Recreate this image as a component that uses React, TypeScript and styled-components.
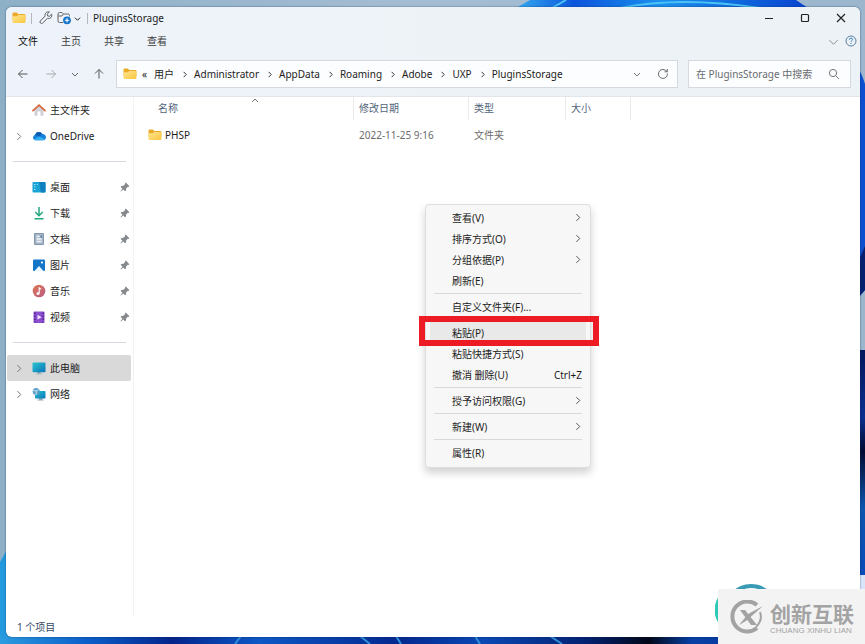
import React from "react";
import styled, { createGlobalStyle } from "styled-components";

const GlobalStyle = createGlobalStyle`
  * { box-sizing: border-box; }
  body { margin: 0; background: #8fabc4; }
  body, button, input, table {
    font-family: "Noto Sans", "Noto Sans CJK SC", sans-serif;
    font-size: 10px;
    line-height: 16px;
    color: #1c1c1c;
  }
`;

const Desktop = styled.div`
  position: relative;
  display: flex;
  min-height: 100vh;
  padding: 7px 5px 7px 6px;
  overflow: hidden;
`;

const WallpaperArt = styled.svg`
  position: absolute;
  inset: 0;
  width: 100%;
  height: 100%;
`;

const ExplorerWindow = styled.main`
  position: relative;
  flex: 1;
  min-width: 0;
  display: flex;
  flex-direction: column;
  background: #fff;
  border-radius: 6px;
  overflow: hidden;
  box-shadow: 0 0 2px rgba(20, 40, 70, 0.7);
`;

const Chrome = styled.header`
  background: linear-gradient(90deg, #eef3fb, #edf2f6 70%);
  border-bottom: 1px solid #e2e6ea;
`;

const TitleBar = styled.div`
  display: flex;
  align-items: center;
  height: 22px;
  padding: 0 7px 0 6px;
`;

const PlainButton = styled.button<{ $width?: number }>`
  display: inline-flex;
  align-items: center;
  justify-content: center;
  flex: none;
  width: ${(p) => (p.$width ? `${p.$width}px` : "auto")};
  height: 20px;
  padding: 0;
  border: 0;
  background: transparent;
`;

const TitleDivider = styled.span`
  width: 1px;
  height: 11px;
  margin: 0 5px;
  background: #b4b8be;
`;

const WindowTitle = styled.h1`
  margin: 0;
  flex: 1;
  font-size: 10px;
  font-weight: 400;
`;

const WindowControls = styled.div`
  display: flex;
  gap: 12px;
`;

const RibbonBar = styled.nav`
  display: flex;
  align-items: center;
  height: 24px;
  padding: 0 1px 0 12px;
`;

const RibbonTab = styled(PlainButton)<{ $active?: boolean }>`
  margin-right: 23px;
  color: ${(p) => (p.$active ? "#111" : "#3c3c3c")};
`;

const Spacer = styled.div`
  flex: 1;
`;

const NavigationRow = styled.div`
  display: flex;
  align-items: center;
  padding: 7px 9px 8px 4px;
`;

const NavButtons = styled.div`
  display: flex;
  width: 106px;
  flex: none;
`;

const AddressBar = styled.div`
  display: flex;
  align-items: center;
  flex: 1;
  min-width: 0;
  height: 28px;
  padding: 0 1px 0 6px;
  background: #fcfdfe;
  border: 1px solid #d3d9df;
`;

const Crumbs = styled.ol`
  display: flex;
  align-items: center;
  gap: 7px;
  margin: 0;
  padding: 0 0 0 5px;
  list-style: none;
  white-space: nowrap;

  li { display: flex; align-items: center; gap: 6px; }
  a { color: #1c1c1c; text-decoration: none; }
`;

const SearchBox = styled.label`
  display: flex;
  align-items: center;
  flex: none;
  width: 163px;
  height: 28px;
  margin-left: 10px;
  padding: 0 10px 0 7px;
  background: #fcfdfe;
  border: 1px solid #d3d9df;
`;

const SearchInput = styled.input`
  flex: 1;
  min-width: 0;
  padding: 0;
  border: 0;
  outline: 0;
  background: transparent;
  &::placeholder { color: #686c70; opacity: 1; }
`;

const Content = styled.div`
  display: flex;
  flex: 1;
`;

const Sidebar = styled.aside`
  flex: none;
  width: 128px;
  padding: 0 2px 0 1px;
  border-right: 1px solid #f3f3f3;
`;

const SideItem = styled.a<{ $selected?: boolean }>`
  display: grid;
  grid-template-columns: 23px 16px 1fr 11px;
  column-gap: 2px;
  align-items: center;
  height: 26px;
  border-radius: 2px;
  color: #1c1c1c;
  text-decoration: none;
  background: ${(p) => (p.$selected ? "#d9d9d9" : "transparent")};

  > :first-child { justify-self: center; }
`;

const SideDivider = styled.hr`
  height: 1px;
  margin: 12px 5px 12px 6px;
  border: 0;
  background: #d5dbe0;
`;

const FilePane = styled.section`
  flex: 1;
  min-width: 0;
  padding-left: 14px;
`;

const FileTable = styled.table`
  table-layout: fixed;
  border-collapse: separate;
  border-spacing: 0;
  width: 483px;

  th {
    position: relative;
    height: 23px;
    padding: 0 0 2px 5px;
    border-right: 1px solid #e8eaec;
    text-align: left;
    font-weight: 400;
    color: #52647a;
  }
  th:first-child { padding-left: 10px; }
  td { height: 29px; padding: 0 0 0 5px; color: #6b6b6b; }
  td:first-child { padding-left: 0; color: #1c1c1c; }
`;

const SortMark = styled.span`
  position: absolute;
  top: 0;
  left: 50%;
  display: flex;
`;

const FileName = styled.a`
  display: flex;
  align-items: center;
  gap: 3px;
  color: inherit;
  text-decoration: none;
`;

const StatusBar = styled.footer`
  height: 21px;
  padding: 3px 11px;
  color: #33475f;
`;

const ContextMenu = styled.div`
  position: absolute;
  left: 425px;
  top: 204px;
  width: 166px;
  padding: 2px 4px 4px;
  background: #f7f7f7;
  border: 1px solid #dedede;
  border-radius: 4px;
  box-shadow: 0 5px 9px rgba(0, 0, 0, 0.18);
`;

const MenuItem = styled.button<{ $hovered?: boolean }>`
  position: relative;
  display: flex;
  align-items: center;
  justify-content: space-between;
  width: 100%;
  height: 21px;
  padding: 0 4px 0 22px;
  border: 0;
  text-align: left;
  background: ${(p) => (p.$hovered ? "#e9e9e9" : "transparent")};
`;

const MenuDivider = styled.hr`
  height: 1px;
  margin: 2px 4px;
  border: 0;
  background: #d9d9d9;
`;

const HighlightFrame = styled.span`
  position: absolute;
  inset: -6px -13px -3px -11px;
  border: 6px solid #ed1c24;
`;

const Watermark = styled.div`
  position: absolute;
  right: 0;
  bottom: 0;
  display: flex;
  align-items: center;
  width: 147px;
  height: 55px;
  padding-left: 11px;
  gap: 5px;
  background: #f3f3f3;
`;

const WatermarkText = styled.div`
  color: #a3a3a3;
  white-space: nowrap;
`;

const WatermarkName = styled.div`
  font: 700 21px/28px "Noto Sans CJK SC", sans-serif;
`;

const WatermarkLatin = styled.div`
  font: 8px/8px "Liberation Sans", sans-serif;
`;

const TealArc = styled.svg`
  position: absolute;
  right: 76px;
  bottom: 0;
  width: 74px;
  height: 60px;
`;

const SvgIcon = styled.svg`
  display: block;
  flex: none;
`;

type Direction = "right" | "down" | "up";

function Chevron({ dir = "right", size = 8, color = "#555" }: { dir?: Direction; size?: number; color?: string }) {
  const paths = { right: "M3 1l3 3-3 3", down: "M1 3l3 3 3-3", up: "M1 5l3-3 3 3" };
  return (
    <SvgIcon width={size} height={size} viewBox="0 0 8 8" fill="none" stroke={color} strokeWidth={8 / size}>
      <path d={paths[dir]} />
    </SvgIcon>
  );
}

function FolderIcon() {
  return (
    <SvgIcon width="14" height="12" viewBox="0 0 14 12">
      <defs>
        <linearGradient id="folderFront" x1="0" y1="0" x2="1" y2="1">
          <stop offset="0" stopColor="#ffe493" />
          <stop offset="1" stopColor="#f8c73c" />
        </linearGradient>
      </defs>
      <path d="M.5 1.6Q.5.6 1.5.6h3.3l1.5 1.5h6.1q1 0 1 1V8H.5z" fill="#e9ab28" />
      <path d="M.5 4.2h4.4l1.4-1.1h6.1q1 0 1 1v6q0 1-1 1H1.5q-1 0-1-1z" fill="url(#folderFront)" />
    </SvgIcon>
  );
}

function WrenchIcon() {
  return (
    <SvgIcon width="14" height="14" viewBox="0 0 14 14" fill="none" stroke="#5c5c5c">
      <path d="M12.6 3.2l-2.2 2.1-1.8-.4-.4-1.7L10.4 1C8.5.3 6.2 1.5 6 3.7q0 .8.2 1.3L1.3 10q-.8 1 .1 2 1 1 2.1.2l4.900-4.800c2.500.8 5.100-1.300 4.200-4.200z" />
    </SvgIcon>
  );
}

function NewFolderIcon() {
  return (
    <SvgIcon width="15" height="14" viewBox="0 0 15 14">
      <path d="M6 11.5H2.5q-1.5 0-1.5-1.5V3q0-1.5 1.5-1.5H5L6.500 3H11q1.500 0 1.500 1.500v1M1 5h4l1.500-2" fill="none" stroke="#666" />
      <circle cx="10" cy="9.3" r="3.9" fill="#1474cc" />
      <path d="M10 7.100v4.400M7.800 9.300h4.400" stroke="#fff" />
    </SvgIcon>
  );
}

const arrowPaths = {
  left: "M10.5 6h-9M5.5 2l-4 4 4 4",
  right: "M1.5 6h9M6.5 2l4 4-4 4",
  up: "M6 10.5v-9M2 5.5l4-4 4 4",
};

function Arrow({ dir, color = "#555" }: { dir: keyof typeof arrowPaths; color?: string }) {
  return (
    <SvgIcon width="12" height="12" viewBox="0 0 12 12" fill="none" stroke={color}>
      <path d={arrowPaths[dir]} />
    </SvgIcon>
  );
}

function PinIcon() {
  return (
    <SvgIcon width="10" height="10" viewBox="0 0 10 10">
      <path d="M5.8.6l3.6 3.600-.8.700-.8-.1-1.700 1.700-.1 1.900-.9.900-1.900-1.900L1 9.500.5 9l2-2.300L.6 4.800l.9-.9 2-.1 1.700-1.700-.2-.8z" fill="#84898e" />
    </SvgIcon>
  );
}

type PlaceKind = "home" | "cloud" | "desktop" | "download" | "document" | "picture" | "music" | "video" | "pc" | "network";

const placeArt: Record<PlaceKind, React.ReactNode> = {
  home: (
    <>
      <path d="M2.500 6.500L7 2.500l4.500 4v6.200H8.400V8.500H5.600v4.200H2.500z" fill="#cfd3d8" />
      <path d="M1 7.600l6-5.500 6 5.500" fill="none" stroke="#d9683c" strokeWidth="1.800" strokeLinecap="round" />
    </>
  ),
  cloud: (
    <>
      <path d="M3 11.200a2.800 2.800 0 0 1 .1-5.400A4 4 0 0 1 10.300 5a3.100 3.100 0 0 1 1 6.200z" fill="#1682d9" />
      <path d="M3.100 5.800A4 4 0 0 1 10.300 5L7 7.600z" fill="#0a5cb3" />
      <path d="M2 10.500l5-3 5.800 2.800q-.6.900-1.800.900H3.200q-.8 0-1.200-.700z" fill="#35b1f1" />
    </>
  ),
  desktop: (
    <>
      <rect x=".5" y="2" width="13" height="10.500" rx="1" fill="#1ba3d6" />
      <path d="M7 2h5.500q1 0 1 1v8.500q0 1-1 1H9z" fill="#0f7fbd" />
      <path d="M2 4.500h1.500M2 7h1.500M2 9.500h1.500M5 4.500h1" stroke="#9ceaff" />
    </>
  ),
  download: <path d="M7 1v8.500M3.300 6L7 9.700 10.700 6M2.500 12.700h9" fill="none" stroke="#20a67d" strokeWidth="1.500" />,
  document: (
    <>
      <rect x="2" y="1" width="10" height="12" rx="1" fill="#8194aa" />
      <rect x="3.200" y="2" width="8" height="10" fill="#a9b9ca" />
      <path d="M4.500 4.500h3M4.500 7h5M4.500 9.500h5" stroke="#eff5fa" strokeWidth="1.300" />
      <path d="M8.500 3.500h1.800v2H8.500z" fill="#5e789b" />
    </>
  ),
  picture: (
    <>
      <rect x="1" y="1.500" width="12" height="11.500" rx="1" fill="#1476c8" />
      <path d="M2.500 13L7 8l4.500 5z" fill="#e9f7ff" />
      <circle cx="10" cy="4.500" r="1.100" fill="#fff" />
    </>
  ),
  music: (
    <>
      <circle cx="7" cy="7" r="6.300" fill="url(#musicDisc)" />
      <path d="M7.200 9.500V3.300q.5 1.600 2.100 2" fill="none" stroke="#fff" strokeWidth="1.100" />
      <circle cx="6" cy="9.400" r="1.500" fill="#fff" />
    </>
  ),
  video: (
    <>
      <rect x="1.500" y="1.500" width="11" height="11.500" rx="1" fill="#8b4ed0" />
      <path d="M2.900 2.500v10M11.100 2.500v10" stroke="#46216f" strokeWidth="1.300" strokeDasharray="1.500 1.500" />
      <path d="M5.500 4.800l4 2.400-4 2.400z" fill="#f4e8ff" />
    </>
  ),
  pc: (
    <>
      <path d="M5.500 11h3v1.500h-3z" fill="#8097a6" />
      <path d="M4.200 13h5.600" stroke="#a3b5c1" />
      <rect x=".5" y="1.500" width="13" height="9.800" rx="1" fill="url(#pcScreen)" />
    </>
  ),
  network: (
    <>
      <path d="M7.500 11h2.500v1.500H7.500zM5.500 13h6" fill="#91a7b5" stroke="#91a7b5" />
      <rect x="3" y="4" width="10.500" height="7.600" rx=".8" fill="url(#pcScreen)" />
      <circle cx="4.200" cy="4.500" r="3.500" fill="#5b9ec6" />
      <path d="M1.200 3.500l3 .5 2.500-1.500M4 8l.3-4" fill="none" stroke="#c3e7f5" />
    </>
  ),
};

function PlaceIcon({ kind }: { kind: PlaceKind }) {
  return (
    <SvgIcon width="14" height="14" viewBox="0 0 14 14">
      <defs>
        <linearGradient id="musicDisc" x2="1" y2="1">
          <stop stopColor="#df7854" />
          <stop offset="1" stopColor="#b85b83" />
        </linearGradient>
        <linearGradient id="pcScreen" x2="1" y2="1">
          <stop stopColor="#29c6cf" />
          <stop offset="1" stopColor="#0874b8" />
        </linearGradient>
      </defs>
      {placeArt[kind]}
    </SvgIcon>
  );
}

interface Place {
  kind: PlaceKind;
  label: string;
  expandable?: boolean;
  pinned?: boolean;
  selected?: boolean;
}

const placeGroups: Place[][] = [
  [
    { kind: "home", label: "主文件夹" },
    { kind: "cloud", label: "OneDrive", expandable: true },
  ],
  [
    { kind: "desktop", label: "桌面", pinned: true },
    { kind: "download", label: "下载", pinned: true },
    { kind: "document", label: "文档", pinned: true },
    { kind: "picture", label: "图片", pinned: true },
    { kind: "music", label: "音乐", pinned: true },
    { kind: "video", label: "视频", pinned: true },
  ],
  [
    { kind: "pc", label: "此电脑", expandable: true, selected: true },
    { kind: "network", label: "网络", expandable: true },
  ],
];

interface MenuEntry {
  label: string;
  submenu?: boolean;
  shortcut?: string;
  hovered?: boolean;
}

const menuGroups: MenuEntry[][] = [
  [
    { label: "查看(V)", submenu: true },
    { label: "排序方式(O)", submenu: true },
    { label: "分组依据(P)", submenu: true },
    { label: "刷新(E)" },
  ],
  [{ label: "自定义文件夹(F)..." }],
  [
    { label: "粘贴(P)", hovered: true },
    { label: "粘贴快捷方式(S)" },
    { label: "撤消 删除(U)", shortcut: "Ctrl+Z" },
  ],
  [{ label: "授予访问权限(G)", submenu: true }],
  [{ label: "新建(W)", submenu: true }],
  [{ label: "属性(R)" }],
];

const crumbs = ["用户", "Administrator", "AppData", "Roaming", "Adobe", "UXP", "PluginsStorage"];

function Wallpaper() {
  return (
    <WallpaperArt viewBox="0 0 865 644" preserveAspectRatio="none" aria-hidden="true">
      <defs>
        <linearGradient id="sky" x2="1">
          <stop stopColor="#8db0c7" />
          <stop offset=".5" stopColor="#a5bdd3" />
          <stop offset="1" stopColor="#9bb6cd" />
        </linearGradient>
        <linearGradient id="topBloom" x2="1">
          <stop stopColor="#35aaf0" />
          <stop offset=".2" stopColor="#0c55dc" />
          <stop offset=".5" stopColor="#1b91ed" />
          <stop offset="1" stopColor="#0742cf" />
        </linearGradient>
        <linearGradient id="rightLower" x2="0" y2="1">
          <stop stopColor="#04165c" />
          <stop offset=".3" stopColor="#0a2f8f" />
          <stop offset=".45" stopColor="#020a30" />
          <stop offset=".7" stopColor="#0d55ad" />
          <stop offset="1" stopColor="#0a4bb8" />
        </linearGradient>
        <linearGradient id="bottomBloom" x2="1">
          <stop stopColor="#2b9ce0" />
          <stop offset=".1" stopColor="#0b5fca" />
          <stop offset=".2" stopColor="#03248b" />
          <stop offset=".3" stopColor="#0d58c6" />
          <stop offset=".46" stopColor="#03288f" />
          <stop offset=".56" stopColor="#0a48b4" />
          <stop offset=".68" stopColor="#03206f" />
          <stop offset=".75" stopColor="#020718" />
          <stop offset=".8" stopColor="#0740a5" />
          <stop offset="1" stopColor="#05298b" />
        </linearGradient>
      </defs>
      <rect width="865" height="644" fill="url(#sky)" />
      <path d="M516 8l14-8h266l12 8z" fill="url(#topBloom)" />
      <path d="M552 8l14-8M620 8q60-12 140 0" fill="none" stroke="#4bc4f5" strokeWidth="2" />
      <path d="M858 68q4 6 7 16v206l-7 8z" fill="#0c4fd0" />
      <path d="M858 262l7-16v44l-7 8z" fill="#05206f" />
      <path d="M858 350h7v225h-7z" fill="url(#rightLower)" />
      <path d="M0 562l8-14v96H0z" fill="#249ade" />
      <path d="M0 636h865v8H0z" fill="url(#bottomBloom)" />
      <path d="M235 644l6-8M360 636l10 8M396 636l5 8M475 636l5 8M550 636l12 8" stroke="#328fd9" strokeWidth="2" />
      <path d="M858 575h7v15h-7z" fill="#d9e6fa" />
    </WallpaperArt>
  );
}

export default function App() {
  return (
    <Desktop>
      <GlobalStyle />
      <Wallpaper />
      <ExplorerWindow>
        <Chrome>
          <TitleBar>
            <FolderIcon />
            <TitleDivider />
            <PlainButton $width={18} aria-label="属性"><WrenchIcon /></PlainButton>
            <PlainButton $width={18} aria-label="新建文件夹"><NewFolderIcon /></PlainButton>
            <PlainButton $width={9} aria-label="自定义快速访问工具栏"><Chevron dir="down" size={7} color="#222" /></PlainButton>
            <TitleDivider />
            <WindowTitle>PluginsStorage</WindowTitle>
            <WindowControls>
              <PlainButton $width={24} aria-label="最小化">
                <SvgIcon width="10" height="10" stroke="#222"><path d="M1 5.500h8" /></SvgIcon>
              </PlainButton>
              <PlainButton $width={24} aria-label="最大化">
                <SvgIcon width="10" height="10" stroke="#222" fill="none"><rect x="1.500" y="1.500" width="7" height="7" rx="1" strokeWidth="1.200" /></SvgIcon>
              </PlainButton>
              <PlainButton $width={24} aria-label="关闭">
                <SvgIcon width="10" height="10" stroke="#222" strokeWidth="1.200"><path d="M1 1l8 8M9 1L1 9" /></SvgIcon>
              </PlainButton>
            </WindowControls>
          </TitleBar>
          <RibbonBar>
            <RibbonTab $active>文件</RibbonTab>
            <RibbonTab>主页</RibbonTab>
            <RibbonTab>共享</RibbonTab>
            <RibbonTab>查看</RibbonTab>
            <Spacer />
            <PlainButton $width={20} aria-label="展开功能区"><Chevron dir="down" size={11} color="#8a9096" /></PlainButton>
            <PlainButton $width={16} aria-label="帮助">
              <SvgIcon width="12" height="12" viewBox="0 0 12 12" fill="none" stroke="#5b7f9e">
                <circle cx="6" cy="6" r="5" />
                <path d="M4.400 4.700q0-1.500 1.600-1.500t1.600 1.400c0 1-1.600 1.100-1.600 2.400M6 8v1" stroke="#2d83c4" />
              </SvgIcon>
            </PlainButton>
          </RibbonBar>
          <NavigationRow>
            <NavButtons>
              <PlainButton $width={25} aria-label="后退"><Arrow dir="left" /></PlainButton>
              <PlainButton $width={31} aria-label="前进"><Arrow dir="right" color="#a5a9ae" /></PlainButton>
              <PlainButton $width={18} aria-label="最近位置"><Chevron dir="down" color="#666" /></PlainButton>
              <PlainButton $width={29} aria-label="向上"><Arrow dir="up" /></PlainButton>
            </NavButtons>
            <AddressBar>
              <FolderIcon />
              <Crumbs>
                <li>«</li>
                {crumbs.map((name, i) => (
                  <li key={name}>
                    {i > 0 && <Chevron size={7} color="#333" />}
                    <a href="#">{name}</a>
                  </li>
                ))}
              </Crumbs>
              <Spacer />
              <PlainButton $width={26} aria-label="历史记录"><Chevron dir="down" color="#777" /></PlainButton>
              <PlainButton $width={26} aria-label="刷新">
                <SvgIcon width="12" height="12" viewBox="0 0 12 12" fill="none" stroke="#6b6b6b">
                  <path d="M10.400 5.500A4.500 4.500 0 1 1 8.800 2.500l1.400 1.200M10.300 1v2.800H7.500" />
                </SvgIcon>
              </PlainButton>
            </AddressBar>
            <SearchBox>
              <SearchInput aria-label="搜索" placeholder="在 PluginsStorage 中搜索" />
              <SvgIcon width="12" height="12" viewBox="0 0 12 12" fill="none" stroke="#777">
                <circle cx="5" cy="5" r="3.600" /><path d="M7.700 7.700L11 11" />
              </SvgIcon>
            </SearchBox>
          </NavigationRow>
        </Chrome>
        <Content>
          <Sidebar>
            {placeGroups.map((group, g) => (
              <React.Fragment key={g}>
                {g > 0 && <SideDivider />}
                {group.map((p) => (
                  <SideItem key={p.label} href="#" $selected={p.selected}>
                    {p.expandable ? <Chevron size={9} color="#777" /> : <span />}
                    <PlaceIcon kind={p.kind} />
                    <span>{p.label}</span>
                    {p.pinned && <PinIcon />}
                  </SideItem>
                ))}
              </React.Fragment>
            ))}
          </Sidebar>
          <FilePane>
            <FileTable>
              <colgroup>
                <col width="206" /><col width="115" /><col width="97" /><col width="65" />
              </colgroup>
              <thead>
                <tr>
                  <th>名称<SortMark><Chevron dir="up" color="#777" /></SortMark></th>
                  <th>修改日期</th>
                  <th>类型</th>
                  <th>大小</th>
                </tr>
              </thead>
              <tbody>
                <tr>
                  <td><FileName href="#"><FolderIcon />PHSP</FileName></td>
                  <td>2022-11-25 9:16</td>
                  <td>文件夹</td>
                  <td />
                </tr>
              </tbody>
            </FileTable>
          </FilePane>
        </Content>
        <StatusBar>1 个项目</StatusBar>
      </ExplorerWindow>
      <ContextMenu role="menu">
        {menuGroups.map((group, g) => (
          <React.Fragment key={g}>
            {g > 0 && <MenuDivider />}
            {group.map((m) => (
              <MenuItem key={m.label} role="menuitem" $hovered={m.hovered}>
                <span>{m.label}</span>
                {m.submenu && <Chevron size={9} />}
                {m.shortcut && <span>{m.shortcut}</span>}
                {m.hovered && <HighlightFrame />}
              </MenuItem>
            ))}
          </React.Fragment>
        ))}
      </ContextMenu>
      <TealArc viewBox="0 0 74 60" fill="none">
        <circle cx="36" cy="27" r="25" stroke="#3a9bb5" strokeWidth="4" />
        <path d="M5 14q-7 12 0 24" stroke="#2fcab5" strokeWidth="4" />
      </TealArc>
      <Watermark>
        <SvgIcon width="36" height="34" viewBox="0 0 36 34" fill="none" stroke="#a3a3a3">
          <path d="M28 5A15 15 0 1 0 28 28" strokeWidth="4" />
          <path d="M11 10h5l12 15h-6zM34 6L17 21l-7 4 9-11z" fill="#a3a3a3" stroke="none" />
          <path d="M31 12q3 8-4 15" strokeWidth="2" />
        </SvgIcon>
        <WatermarkText>
          <WatermarkName>创新互联</WatermarkName>
          <WatermarkLatin>CHUANG XINHU LIAN</WatermarkLatin>
        </WatermarkText>
      </Watermark>
    </Desktop>
  );
}
